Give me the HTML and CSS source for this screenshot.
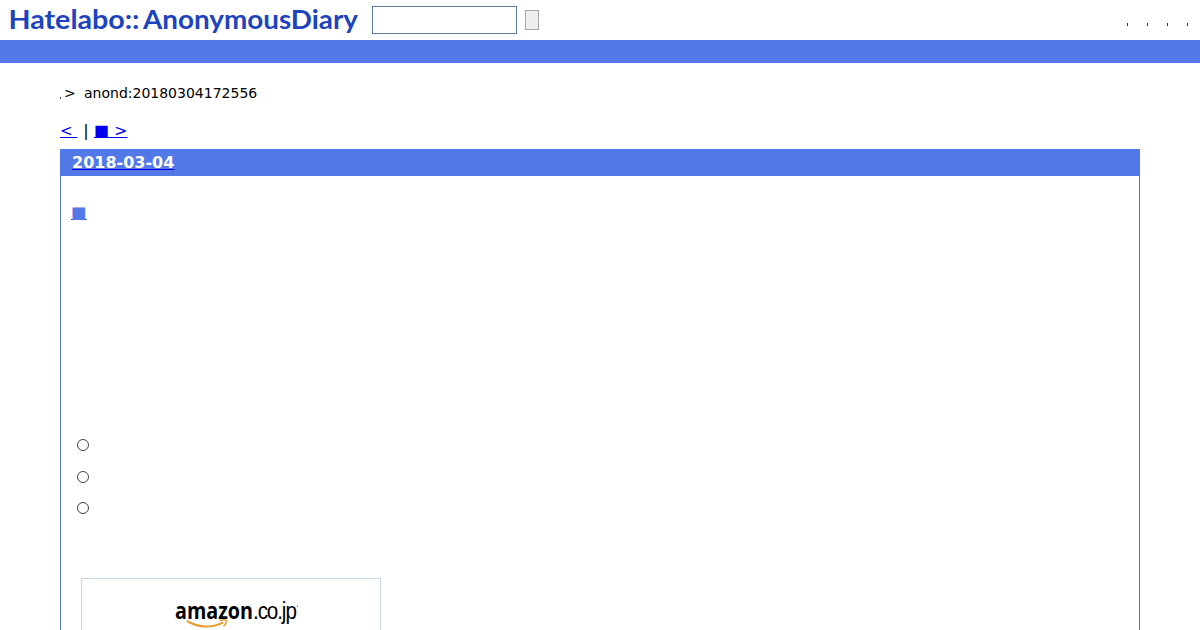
FILE: index.html
```
<!DOCTYPE html>
<html lang="ja">
<head>
    <meta charset="UTF-8">
    <title>anond:20180304172556</title>
    <link rel="stylesheet" href="styles.css">
</head>
<body>
    <div class="header">
        <svg class="logo" width="350" height="40" viewBox="0 0 350 40">
            <text x="-.5" y="29" textLength="131" lengthAdjust="spacingAndGlyphs">Hatelabo::</text>
            <text x="134" y="28.5" textLength="215" lengthAdjust="spacingAndGlyphs">AnonymousDiary</text>
        </svg>
        <form class="search">
            <input type="text" class="search-word">
            <button type="button" class="search-button"></button>
        </form>
        <ul class="menu">
            <li></li>
            <li></li>
            <li></li>
            <li></li>
        </ul>
    </div>
    <div class="bar"></div>

    <div class="main">
        <p class="breadcrumb"><i class="dot"></i><span class="arrow">&gt;</span><span>anond:20180304172556</span></p>
        <p class="pager">
            <a href="#" class="prev">&lt;&nbsp;</a>
            <span class="sep">|</span>
            <a href="#">■&nbsp;&gt;</a>
        </p>

        <div class="day">
            <h2><a href="#">2018-03-04</a></h2>
            <div class="section">
                <h3><a href="#">■</a></h3>
                <ul class="items">
                    <li></li>
                    <li></li>
                    <li></li>
                </ul>
                <div class="amazon">
                    <svg width="126" height="32" viewBox="0 0 126 32">
                        <text class="amazon-name" x="0" y="20.5" textLength="78" lengthAdjust="spacingAndGlyphs">amazon</text>
                        <g transform="translate(78 20.5) scale(.86 1)">
                            <text class="amazon-tld" x="0" y="0" textLength="51">.co.jp</text>
                        </g>
                        <circle cx="122.5" cy="8" r=".7" fill="#555"/>
                        <path d="M12 23C23 29.8 37 30.3 48 24.5" fill="none" stroke="#e9a036" stroke-width="2.2"/>
                        <path d="M44.5 22.5Q49.5 21 51.5 22.3Q51.5 25.5 48.5 28.5" fill="none" stroke="#e9a036" stroke-width="1.5"/>
                    </svg>
                </div>
            </div>
        </div>
    </div>
</body>
</html>
```
FILE: styles.css
```
* {
    margin: 0;
    padding: 0;
    box-sizing: border-box;
}

body {
    display: flex;
    flex-direction: column;
    height: 100vh;
    background-color: #fff;
    color: #000;
    font-family: "DejaVu Sans", sans-serif;
    font-size: 16px;
    overflow: hidden;
}

ul {
    list-style: none;
}

a {
    color: #0000ee;
}

/* header */
.header {
    display: flex;
    flex: none;
    height: 40px;
    padding: 0 12px 0 9px;
}

.logo {
    flex: none;
    fill: #1d43bd;
    font-family: Lato, sans-serif;
    font-size: 26.5px;
    font-weight: bold;
}

.search {
    display: flex;
    align-items: center;
    gap: 8px;
    margin-left: 13px;
}

.search-word {
    width: 145px;
    height: 28px;
    border: 1px solid #5b7ba6;
    background-color: #fff;
}

.search-button {
    width: 14px;
    height: 20px;
    border: 1px solid #a6a6a6;
    background-color: #efefef;
}

.menu {
    display: flex;
    gap: 19px;
    margin-left: auto;
    padding-top: 23px;
}

.menu li {
    width: 1px;
    height: 3px;
    background-color: #333;
}

.bar {
    flex: none;
    height: 23px;
    background-color: #5279e7;
}

/* contents */
.main {
    display: flex;
    flex: 1;
    flex-direction: column;
    min-height: 0;
    padding: 20px 60px 0;
}

.breadcrumb {
    display: flex;
    flex: none;
    height: 20px;
    font-size: 14px;
    line-height: 20px;
}

.dot {
    width: 1px;
    height: 2px;
    margin: 14px 3px 0 0;
    background-color: #555;
}

.arrow {
    width: 20px;
}

.pager {
    display: flex;
    flex: none;
    height: 20px;
    margin: 18px 0 8px;
    line-height: 20px;
}

.pager .prev {
    font-size: 15px;
}

.sep {
    width: 16.5px;
    padding-left: 6px;
}

.day {
    flex: 1;
    min-height: 0;
    border: solid #5279b4;
    border-width: 0 1px;
}

.day h2 {
    height: 27px;
    margin: 0 -1px;
    padding-left: 12px;
    background-color: #5279e7;
    font-size: 16px;
    line-height: 27px;
}

.day h2 a {
    color: #fff;
    text-decoration-color: #0000ee;
}

.section {
    padding: 27px 10px 0;
}

.section h3 {
    height: 20px;
    font-size: 16.5px;
    font-weight: normal;
    line-height: 20px;
}

.section h3 a {
    color: #5279e7;
    text-decoration-color: #2222aa;
}

.items {
    display: grid;
    gap: 19.5px;
    padding: 216px 0 0 6px;
}

.items li {
    width: 12px;
    height: 12px;
    border: 1px solid #444;
    border-radius: 50%;
}

.amazon {
    display: flex;
    justify-content: center;
    width: 300px;
    height: 53px;
    margin: 64px 0 0 10px;
    padding: 19px 0 0 14px;
    border: 1px solid #c2dcec;
    border-bottom: none;
}

.amazon-name {
    font-family: "Open Sans", sans-serif;
    font-size: 23px;
    font-weight: bold;
}

.amazon-tld {
    font-family: "Liberation Sans", sans-serif;
    font-size: 24px;
}
```
